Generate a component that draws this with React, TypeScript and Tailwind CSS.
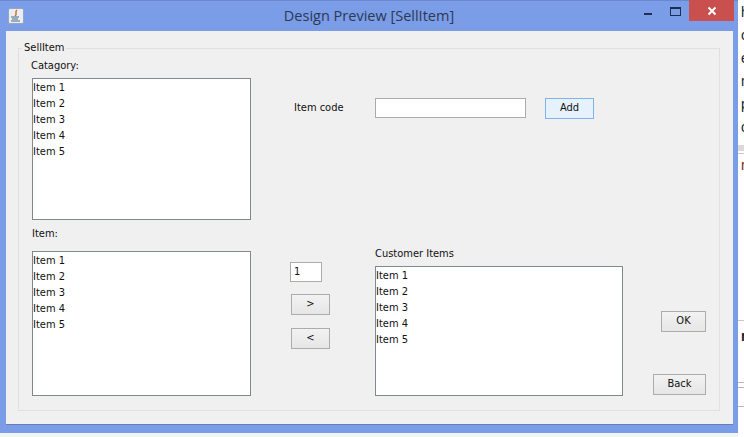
const items = ["Item 1", "Item 2", "Item 3", "Item 4", "Item 5"];
const behind = ["h", "c", "e", "n", "p", "c"];

const ListBox = ({ className }: { className: string }) => (
  <div className={`bg-white border border-[#828790] pt-[1px] text-[#111] ${className}`}>
    {items.map((item) => (
      <div key={item} className="h-[16px] leading-[16px]">
        {item}
      </div>
    ))}
  </div>
);

const Btn = ({ label, className }: { label: string; className: string }) => (
  <button className={`flex items-center justify-center border text-[#111] ${className}`}>
    {label}
  </button>
);

const plain = "bg-linear-to-b from-[#f2f2f2] to-[#e6e6e6] border-[#acacac]";

export default function App() {
  return (
    <div className="w-[744px] h-[437px] bg-[#f3f4f6] overflow-hidden flex items-start font-['DejaVu_Sans',sans-serif] font-stretch-condensed text-[11px]">
      <div className="w-[738px] h-[433px] shrink-0 bg-[#7b9ce6] flex flex-col border-t border-[#6a86cc]">
        {/* title bar */}
        <div className="h-[30px] grid grid-cols-[1fr_auto_1fr] items-center shrink-0">
          <div className="ml-[8px] w-[16px] h-[16px] bg-[#e9eef5] border border-[#9aa5b5] rounded-[2px] flex items-center justify-center">
            <svg width="14" height="14" viewBox="0 0 14 14" fill="none">
              <path d="M8 1 C5 3 9 5 6 7" stroke="#d2691e" strokeWidth="1.4" />
              <path d="M2 8h8M3 10h6M2 12h9" stroke="#4a6a8a" strokeWidth="1" />
            </svg>
          </div>
          <div className="text-center text-[14.5px] text-[#2a3a55] font-['Open_Sans',sans-serif] font-stretch-normal">
            Design Preview [SellItem]
          </div>
          <div className="flex items-start justify-end h-full">
            <svg width="12" height="4" viewBox="0 0 12 4" className="mt-[12px] mr-[16px]">
              <rect x="2" y="0" width="8" height="2" fill="#1d2f50" />
            </svg>
            <div className="w-[11px] h-[9px] border border-[#1d2f50] border-t-2 mt-[6px] mr-[8px]" />
            <div className="w-[45px] h-[21px] mr-[4px] bg-[#c9504f] flex items-center justify-center -mt-[1px]">
              <svg width="10" height="10" viewBox="0 0 10 10">
                <path d="M1.5 1.5 L8.5 8.5 M8.5 1.5 L1.5 8.5" stroke="#fff" strokeWidth="2" />
              </svg>
            </div>
          </div>
        </div>

        {/* content */}
        <div className="ml-[6px] mr-[5px] h-[394px] bg-[#f0f0f0] pt-[17px] pl-[12px] pr-[13px] pb-[14px] border-b border-[#6a7fb0]">
          <fieldset className="relative h-[363px] border border-[#e0e0e0] flex">
            <legend className="absolute -top-[8px] left-[3px] px-[2px] bg-[#f0f0f0] text-[#111] leading-[14px]">SellItem</legend>
            <div className="w-full pl-[13px] pt-[9px] flex flex-col">
              <div className="flex h-[163px]">
                <div className="w-[219px]">
                  <div className="h-[20px] pt-[1px] -ml-[1px] leading-[14px] text-[#111]">Catagory:</div>
                  <ListBox className="h-[142px]" />
                </div>
                <div className="flex items-start pt-[40px]">
                  <div className="ml-[43px] w-[81px] h-[20px] leading-[20px] text-[#111]">Item code</div>
                  <div className="w-[151px] h-[20px] bg-white border border-[#ababab]" />
                  <Btn label="Add" className="ml-[19px] w-[49px] h-[21px] bg-[#e5f1fb] border-[#7eb4ea]" />
                </div>
              </div>
              <div className="flex mt-[5px]">
                <div className="w-[219px]">
                  <div className="h-[25px] pt-[1px] leading-[14px] text-[#111]">Item:</div>
                  <ListBox className="h-[145px]" />
                </div>
                <div className="ml-[39px] w-[85px] pt-[36px]">
                  <div className="w-[32px] h-[20px] bg-white border border-[#ababab] pl-[3px] leading-[18px] text-[#111]">1</div>
                  <Btn label=">" className={`ml-[1px] mt-[12px] w-[39px] h-[21px] ${plain}`} />
                  <Btn label="<" className={`ml-[1px] mt-[13px] w-[39px] h-[21px] ${plain}`} />
                </div>
                <div className="w-[248px] pt-[20px]">
                  <div className="h-[20px] pt-[1px] leading-[14px] text-[#111]">Customer Items</div>
                  <ListBox className="h-[130px]" />
                </div>
                <div className="ml-[30px] flex flex-col items-end w-[53px] pt-[85px]">
                  <Btn label="OK" className={`w-[45px] h-[21px] ${plain}`} />
                  <Btn label="Back" className={`mt-[42px] w-[53px] h-[21px] ${plain}`} />
                </div>
              </div>
            </div>
          </fieldset>
        </div>
      </div>

      {/* sliver of the window behind */}
      <div className="w-[6px] h-full shrink-0 bg-white overflow-hidden pl-[3px] pt-[1px] font-['Liberation_Sans',sans-serif] font-stretch-normal text-[14px] text-[#222]">
        {behind.map((letter, i) => (
          <div key={i} className="h-[23px] leading-[23px]">{letter}</div>
        ))}
        <div className="-ml-[3px] mt-[6px] h-[6px] bg-[#d9d9d9]" />
        <div className="-ml-[3px] mt-[2px] h-px bg-[#c8c8c8]" />
        <div className="mt-[4px] h-[14px] leading-[14px] text-[#7a2a10]">r</div>
        <div className="-ml-[3px] mt-[148px] h-px bg-[#c8c8c8]" />
        <div className="mt-[8px] h-[14px] leading-[14px] font-bold">r</div>
        <div className="-ml-[3px] mt-[39px] h-px bg-[#b8b8b8]" />
        <div className="-ml-[3px] mt-[4px] h-px bg-[#b8b8b8]" />
        <div className="-ml-[3px] mt-[18px] h-px bg-[#b8b8b8]" />
      </div>
    </div>
  );
}
